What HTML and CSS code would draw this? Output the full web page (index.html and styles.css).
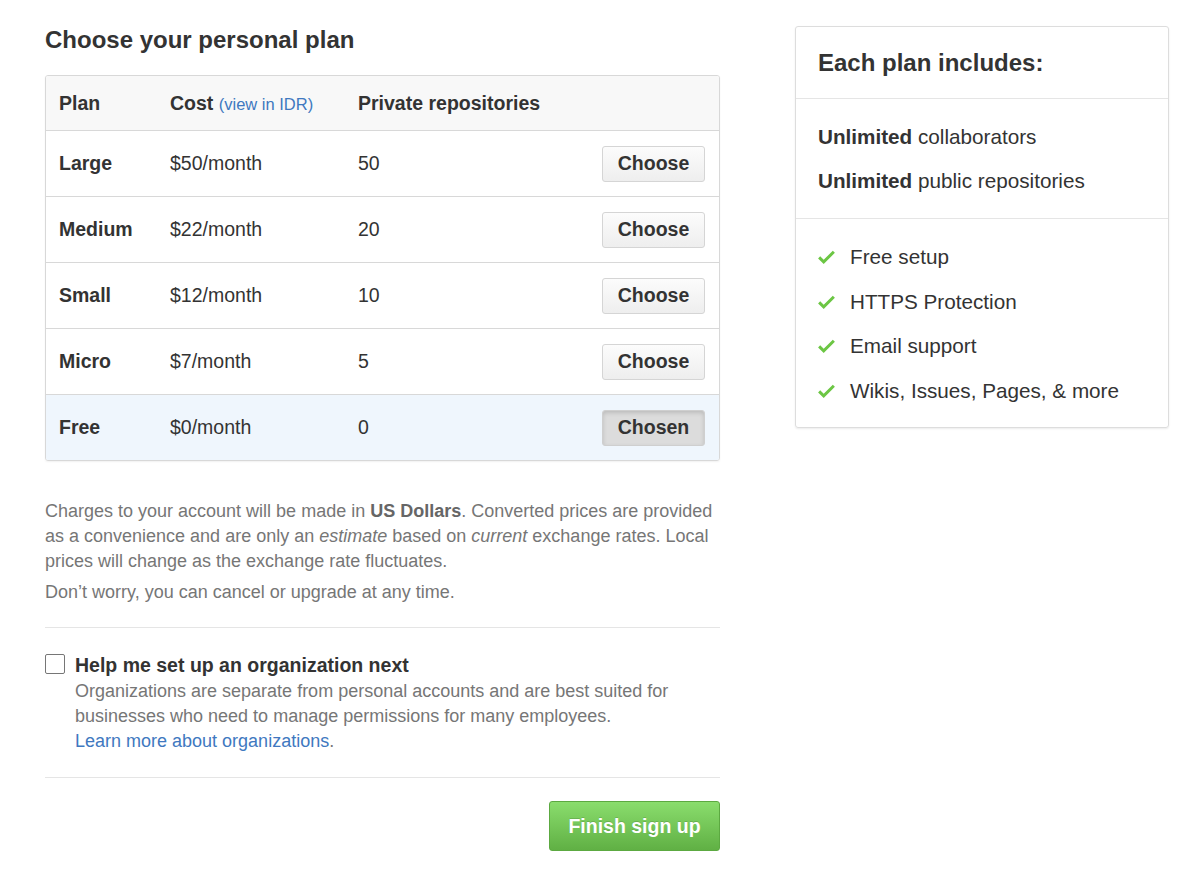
FILE: index.html
```html
<!DOCTYPE html>
<html>
<head>
<meta charset="utf-8">
<link rel="stylesheet" href="styles.css">
</head>
<body>
<div class="page">
  <div class="main">
    <h2 class="title">Choose your personal plan</h2>
    <div class="plans">
      <div class="row head">
        <div class="c-plan">Plan</div>
        <div class="c-cost">Cost <a class="link small">(view in IDR)</a></div>
        <div class="c-repo">Private repositories</div>
        <div class="c-act"></div>
      </div>
      <div class="row">
        <div class="c-plan b">Large</div>
        <div class="c-cost">$50/month</div>
        <div class="c-repo">50</div>
        <div class="c-act"><button class="btn">Choose</button></div>
      </div>
      <div class="row">
        <div class="c-plan b">Medium</div>
        <div class="c-cost">$22/month</div>
        <div class="c-repo">20</div>
        <div class="c-act"><button class="btn">Choose</button></div>
      </div>
      <div class="row">
        <div class="c-plan b">Small</div>
        <div class="c-cost">$12/month</div>
        <div class="c-repo">10</div>
        <div class="c-act"><button class="btn">Choose</button></div>
      </div>
      <div class="row">
        <div class="c-plan b">Micro</div>
        <div class="c-cost">$7/month</div>
        <div class="c-repo">5</div>
        <div class="c-act"><button class="btn">Choose</button></div>
      </div>
      <div class="row chosen">
        <div class="c-plan b">Free</div>
        <div class="c-cost">$0/month</div>
        <div class="c-repo">0</div>
        <div class="c-act"><button class="btn selected">Chosen</button></div>
      </div>
    </div>

    <p class="note">Charges to your account will be made in <strong>US Dollars</strong>. Converted prices are provided as a convenience and are only an <em>estimate</em> based on <em>current</em> exchange rates. Local prices will change as the exchange rate fluctuates.</p>
    <p class="note second">Don’t worry, you can cancel or upgrade at any time.</p>

    <div class="org">
      <span class="checkbox"></span>
      <div class="org-text">
        <div class="org-title">Help me set up an organization next</div>
        <div class="org-desc">Organizations are separate from personal accounts and are best suited for businesses who need to manage permissions for many employees.<br><a class="link">Learn more about organizations</a>.</div>
      </div>
    </div>

    <div class="actions">
      <button class="btn-primary">Finish sign up</button>
    </div>
  </div>

  <div class="side">
    <div class="box">
      <div class="box-head">Each plan includes:</div>
      <div class="box-sec">
        <div class="line"><strong>Unlimited</strong>&nbsp;collaborators</div>
        <div class="line"><strong>Unlimited</strong>&nbsp;public repositories</div>
      </div>
      <div class="box-sec checks">
        <div class="line"><svg class="ck" viewBox="0 3 12 10" width="17" height="14"><path d="M12 5l-8 8-4-4 1.5-1.5L4 10l6.5-6.5z" fill="#6cc644"/></svg><span>Free setup</span></div>
        <div class="line"><svg class="ck" viewBox="0 3 12 10" width="17" height="14"><path d="M12 5l-8 8-4-4 1.5-1.5L4 10l6.5-6.5z" fill="#6cc644"/></svg><span>HTTPS Protection</span></div>
        <div class="line"><svg class="ck" viewBox="0 3 12 10" width="17" height="14"><path d="M12 5l-8 8-4-4 1.5-1.5L4 10l6.5-6.5z" fill="#6cc644"/></svg><span>Email support</span></div>
        <div class="line"><svg class="ck" viewBox="0 3 12 10" width="17" height="14"><path d="M12 5l-8 8-4-4 1.5-1.5L4 10l6.5-6.5z" fill="#6cc644"/></svg><span>Wikis, Issues, Pages, &amp; more</span></div>
      </div>
    </div>
  </div>
</div>
</body>
</html>
```

FILE: styles.css
```css
* { box-sizing: border-box; }
body {
  margin: 0;
  background: #fff;
  font-family: "Liberation Sans", Arial, sans-serif;
  color: #333;
  font-size: 19.5px;
}
.page {
  display: flex;
  gap: 75px;
  padding: 26px 0 0 45px;
}
.main { width: 675px; }
.title {
  margin: 0 0 22px;
  font-size: 24px;
  font-weight: bold;
  line-height: 27px;
}
.plans {
  border: 1px solid #d8d8d8;
  border-radius: 3px;
  box-shadow: 0 1px 2px rgba(0,0,0,0.06);
  overflow: hidden;
}
.row {
  display: flex;
  align-items: center;
  height: 66px;
  padding: 0 14px 0 13px;
  border-top: 1px solid #d8d8d8;
}
.row.head {
  border-top: 0;
  height: 54px;
  background: #f8f8f8;
  font-weight: bold;
}
.row.chosen { background: #eff6fd; }
.c-plan { width: 111px; }
.c-cost { width: 188px; }
.c-repo { flex: 1; }
.c-act { display: flex; justify-content: flex-end; }
.b { font-weight: bold; }
.link { color: #4078c0; text-decoration: none; font-weight: normal; }
.small { font-size: 16.5px; }
.btn {
  font-family: inherit;
  font-size: 19.5px;
  font-weight: bold;
  color: #333;
  width: 103px;
  height: 36px;
  border: 1px solid #d5d5d5;
  border-radius: 3px;
  background: linear-gradient(#fcfcfc, #eee);
  padding: 0;
}
.btn.selected {
  background: #dcdcdc;
  border-color: #cfcfcf;
  box-shadow: inset 0 2px 4px rgba(0,0,0,0.15);
}
.note {
  margin: 38px 0 0;
  font-size: 18px;
  line-height: 25px;
  color: #767676;
}
.note strong { color: #666; }
.note.second { margin-top: 6px; }
.org {
  margin-top: 22px;
  border-top: 1px solid #e5e5e5;
  border-bottom: 1px solid #e5e5e5;
  padding: 26px 0 23px;
  display: flex;
  gap: 10px;
}
.checkbox {
  flex: none;
  width: 20px;
  height: 20px;
  border: 1px solid #767676;
  border-radius: 2px;
  margin-top: 0;
}
.org-title {
  font-weight: bold;
  font-size: 19.5px;
  line-height: 22px;
}
.org-desc {
  font-size: 18px;
  line-height: 25px;
  color: #767676;
  margin-top: 3px;
}
.actions {
  display: flex;
  justify-content: flex-end;
  padding-top: 23px;
}
.btn-primary {
  font-family: inherit;
  font-size: 19.5px;
  font-weight: bold;
  color: #fff;
  width: 171px;
  height: 50px;
  border: 1px solid #5ca941;
  border-radius: 3px;
  background: linear-gradient(#8add6d, #60b044);
  text-shadow: 0 -1px 0 rgba(0,0,0,0.15);
}
.side { width: 374px; }
.box {
  border: 1px solid #ddd;
  border-radius: 3px;
  box-shadow: 0 1px 2px rgba(0,0,0,0.08);
}
.box-head {
  font-size: 24px;
  font-weight: bold;
  padding: 22px 22px 21px;
  line-height: 28px;
  border-bottom: 1px solid #e5e5e5;
}
.box-sec {
  padding: 16px 22px 15px;
  font-size: 20.7px;
}
.box-sec + .box-sec { border-top: 1px solid #e5e5e5; padding-top: 16px; padding-bottom: 14px; }
.line {
  line-height: 22px;
  padding: 11px 0;
  display: flex;
  align-items: center;
}
.checks .line { padding: 11px 0 11.5px; }
.ck { margin: 0 15px 0 0; flex: none; }
```
